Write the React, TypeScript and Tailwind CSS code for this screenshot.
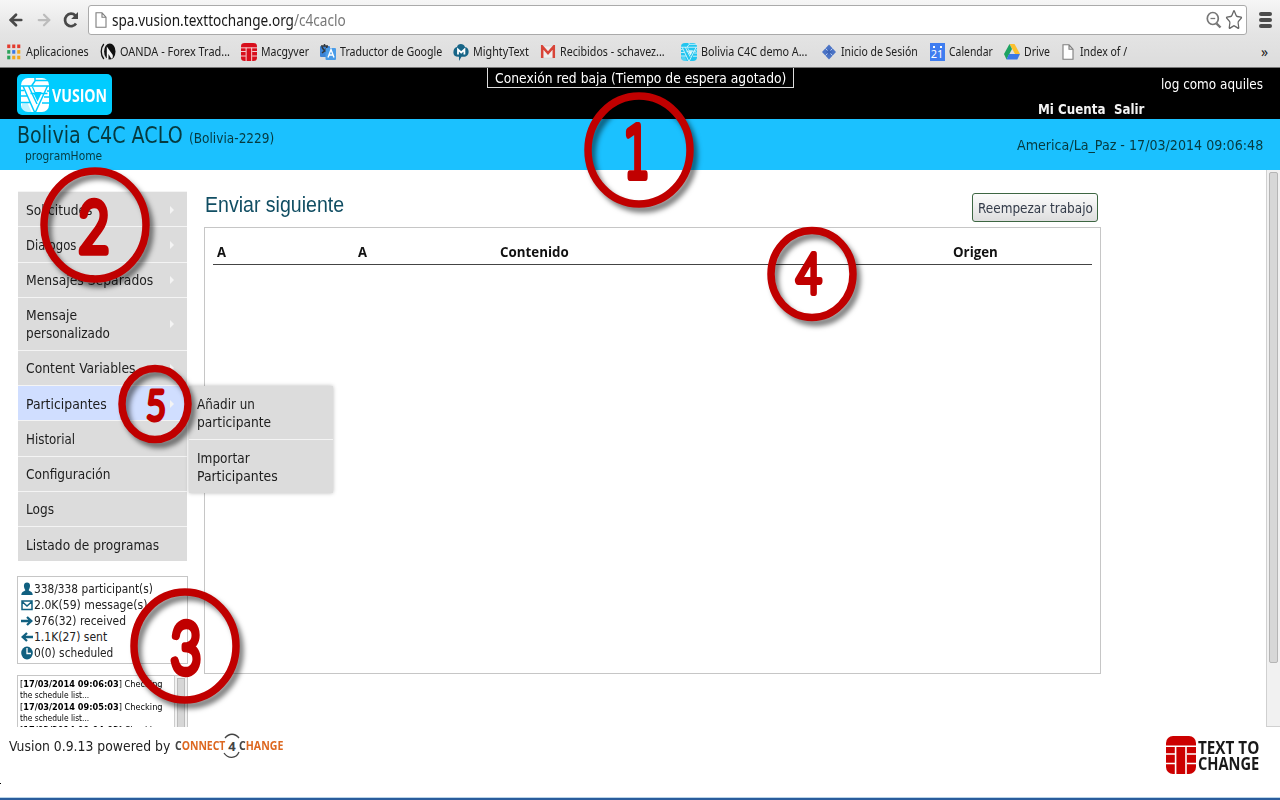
import { useLayoutEffect, useRef, useState, type ReactNode } from "react";
import { ArrowLeft, ArrowRight, Star } from "lucide-react";

// Single line of text, condensed or widened to occupy exactly `w` pixels.
function Fit({ w, className = "", children }: { w: number; className?: string; children: ReactNode }) {
  const ref = useRef<HTMLSpanElement>(null);
  const [scale, setScale] = useState(1);
  useLayoutEffect(() => {
    const el = ref.current;
    if (el && el.offsetWidth) setScale(w / el.offsetWidth);
  }, [w]);
  return (
    <span className={`block shrink-0 whitespace-nowrap ${className}`} style={{ width: w }}>
      <span ref={ref} className="inline-block origin-left" style={{ transform: `scaleX(${scale})` }}>
        {children}
      </span>
    </span>
  );
}

const PageIcon = ({ className = "" }: { className?: string }) => (
  <svg viewBox="0 0 12 16" className={className} fill="#fff" stroke="#7d7d7d" strokeWidth="1.1">
    <path d="M1 .8h6l4 4.4v10H1zM7 .8v4.4h4" />
  </svg>
);

const AppsIcon = () => (
  <svg viewBox="0 0 16 16" className="size-4">
    {["#e33b2e", "#e33b2e", "#e33b2e", "#2ba35a", "#3a78e7", "#f4a81d", "#2ba35a", "#f4a81d", "#f4a81d"].map((c, i) => (
      <rect key={i} x={1.2 + (i % 3) * 5} y={0.5 + Math.floor(i / 3) * 5.6} width="3.1" height="3.6" fill={c} />
    ))}
  </svg>
);

const OandaIcon = () => (
  <svg viewBox="0 0 16 17" className="h-[17px] w-4">
    <path d="M3.8 1C.4 5 .4 12 3.800 16" fill="none" stroke="#111" strokeWidth="1.3" />
    <ellipse cx="9.800" cy="8.500" rx="5.700" ry="8" fill="#111" />
    <path d="M6.800 3.500l6 8.500v2.500l-1.500 1.200L8.500 11v5H6.800z" fill="#f4f4f4" />
  </svg>
);

const TtcIcon = ({ className = "size-4", color = "#d80e1c" }: { className?: string; color?: string }) => (
  <svg viewBox="0 0 30 38" preserveAspectRatio="none" className={className}>
    <rect width="30" height="38" rx="7" fill={color} />
    <path d="M0 10.2h30M9.6 10v28M20 10v28M0 18h9M0 27.5h9M21 18h9M21 27.5h9" stroke="#fff" strokeWidth="1.6" fill="none" />
  </svg>
);

const TranslateIcon = () => (
  <svg viewBox="0 0 16 17" className="h-[17px] w-4">
    <rect x="0" y="3" width="10" height="11" rx="1" fill="#3c83d4" />
    <path d="M1 3h7M4.5 1v2M2 10c3-2 5-4 5-7M2 4c1 3 3 4 5 5" stroke="#33383d" strokeWidth="1.5" fill="none" />
    <rect x="5.5" y="5" width="10.5" height="12" rx="1" fill="#4a9ce8" />
    <path d="M8 14.5l3-8 3 8M9 12h4" stroke="#fff" strokeWidth="1.4" fill="none" />
  </svg>
);

const MightyIcon = () => (
  <svg viewBox="0 0 16 18" className="h-[18px] w-4">
    <path d="M4 4C4.500 0 11 0 12 4c4 0 5 7 1.500 9-1.500 1-4 .8-5 .8L6 18v-4.200C2 14 .2 12 .4 9 .5 6 2 4.500 4 4z" fill="#176587" />
    <path d="M5 11.500v-5l3.200 3 3.200-3v5" stroke="#fff" strokeWidth="1.8" fill="none" />
  </svg>
);

const GmailIcon = () => (
  <svg viewBox="0 0 16 14" className="h-3.5 w-4">
    <path d="M2 1h12v12H2z" fill="#eee" stroke="#c9c9c9" strokeWidth=".5" />
    <path d="M2.200 13V1.500L8 8l5.800-6.500V13" stroke="#d84438" strokeWidth="2.500" fill="none" />
  </svg>
);

const VusionMark = ({ className, fg, bg }: { className: string; fg: string; bg: string }) => (
  <svg viewBox="0 0 28 34" preserveAspectRatio="none" className={className}>
    <rect width="28" height="34" rx="7" fill={fg} />
    <path d="M0 8h28M14 0v2.500h14M14 3L10.500 8M0 12.500h3M0 18h6M0 24.500h9M26 13h2M23 19h5M21 25h7M2 8l11.500 26M7.500 8l8.500 18M26.500 8L14.500 34M9.500 15.500h17" stroke={bg} strokeWidth="1.500" fill="none" />
    <path d="M1 25.500l5.500-.5 4 9H1zM12.500 15.500h8l-4 8z" fill={bg} fillOpacity=".25" />
    <path d="M11.500 9l2.500 5.500h6.500" stroke={bg} strokeWidth="1.200" fill="none" />
    <path d="M13 16h7l-3.500 7.500z" fill={bg} />
  </svg>
);

const DiamondIcon = () => (
  <svg viewBox="0 0 16 16" className="size-4">
    <path d="M8 .5L15 8l-7 7.500L1 8z" fill="#4b73c5" />
    <path d="M4.500 4.500l7 7M11.500 4.500l-7 7" stroke="#c4d5f4" strokeWidth=".9" />
    <path d="M8 5l3 3-3 3-3-3z" fill="#3c64b8" />
  </svg>
);

const CalendarIcon = () => (
  <span className="flex h-[18px] w-[15px] flex-col items-center justify-end bg-[#3f7df0] pb-px text-[11px] leading-[12px] text-white">
    <span className="flex gap-[5px]"><i className="size-[2px] bg-white" /><i className="size-[2px] bg-white" /></span>
    21
  </span>
);

const DriveIcon = () => (
  <svg viewBox="0 0 16 16" className="size-4">
    <path d="M5.500 0h5l5.500 10h-5z" fill="#fbc02d" />
    <path d="M5.500 0L0 10l2.500 5.500L8 5z" fill="#1da362" />
    <path d="M5 10h11l-2.700 5.500H2.500z" fill="#3b78e7" />
  </svg>
);

const bookmarks = [
  { gap: "ml-[6px]", icon: <AppsIcon />, label: "Aplicaciones", w: 63 },
  { gap: "ml-[11px]", icon: <OandaIcon />, label: "OANDA - Forex Trad...", w: 110 },
  { gap: "ml-[11px]", icon: <TtcIcon className="h-[18px] w-4" />, label: "Macgyver", w: 48 },
  { gap: "ml-[11px]", icon: <TranslateIcon />, label: "Traductor de Google", w: 102 },
  { gap: "ml-[11px]", icon: <MightyIcon />, label: "MightyText", w: 56 },
  { gap: "ml-[11px]", icon: <GmailIcon />, label: "Recibidos - schavez...", w: 105 },
  { gap: "ml-[16px]", icon: <VusionMark className="h-[18px] w-4" fg="#22c5ef" bg="#e4f8fc" />, label: "Bolivia C4C demo A...", w: 106 },
  { gap: "ml-[14px]", icon: <DiamondIcon />, label: "Inicio de Sesión", w: 77 },
  { gap: "ml-[11px]", icon: <CalendarIcon />, label: "Calendar", w: 44 },
  { gap: "ml-[11px]", icon: <DriveIcon />, label: "Drive", w: 26 },
  { gap: "ml-[10px]", icon: <PageIcon className="h-4 w-3" />, label: "Index of /", w: 47 },
];

const menu = [
  { lines: [["Solicitudes", 66]], arrow: true },
  { lines: [["Dialogos", 50]], arrow: true },
  { lines: [["Mensajes Separados", 127]], arrow: true },
  { lines: [["Mensaje", 51], ["personalizado", 84]], arrow: true },
  { lines: [["Content Variables", 110]], arrow: true },
  { lines: [["Participantes", 81]], arrow: true, active: true },
  { lines: [["Historial", 49]] },
  { lines: [["Configuración", 84]] },
  { lines: [["Logs", 28]] },
  { lines: [["Listado de programas", 133]] },
] as { lines: [string, number][]; arrow?: boolean; active?: boolean }[];

const Glyph = ({ children }: { children: ReactNode }) => (
  <svg viewBox="0 0 12 14" className="mr-px h-3.5 w-3 shrink-0" fill="#116080" stroke="none">{children}</svg>
);

const stats: { icon: ReactNode; label: string; w: number }[] = [
  { icon: <Glyph><path d="M6 .5c4 0 3.500 5 1.700 7.500 0 1.500 4 1 4 5H.3c0-4 4-3.500 4-5C2.500 5.500 2 .5 6 .5z" /></Glyph>, label: "338/338 participant(s)", w: 119 },
  { icon: <Glyph><path d="M1 3h10v8.500H1zM1 3.500L6 8l5-4.500" fill="none" stroke="#116080" strokeWidth="1.500" /></Glyph>, label: "2.0K(59) message(s)", w: 113 },
  { icon: <Glyph><path d="M0 7h10M6 3l4.300 4L6 11" fill="none" stroke="#116080" strokeWidth="2.300" /></Glyph>, label: "976(32) received", w: 91.5 },
  { icon: <Glyph><path d="M12 7H2M6 3L1.700 7 6 11" fill="none" stroke="#116080" strokeWidth="2.300" /></Glyph>, label: "1.1K(27) sent", w: 73 },
  { icon: <Glyph><ellipse cx="6" cy="7" rx="5.800" ry="6.500" /><path d="M6 2v5.500h4" stroke="#fff" strokeWidth="1.300" fill="none" /></Glyph>, label: "0(0) scheduled", w: 79.5 },
];

type BadgeProps = {
  className: string;
  digitClass: string;
  rx: number;
  ry: number;
  n: number;
  size: number;
  stroke: number;
  sx: number;
  dx?: number;
  dy: number;
};

function Badge({ className, digitClass, rx, ry, n, size, stroke, sx, dx = 0, dy }: BadgeProps) {
  return (
    <svg className={`absolute z-20 h-[140px] w-[140px] overflow-visible ${className}`} viewBox="-70 -70 140 140">
      <ellipse rx={rx} ry={ry} fill="none" stroke="#c00000" strokeWidth="7.500" className="[filter:drop-shadow(4px_5px_2.5px_rgba(0,0,0,0.5))]" />
      <text
        transform={`translate(${dx} ${dy}) scale(${sx} 1)`}
        textAnchor="middle"
        fontSize={size}
        fill="#c00000"
        stroke="#c00000"
        strokeWidth={stroke}
        strokeLinejoin="round"
        className={digitClass}
      >
        {n}
      </text>
    </svg>
  );
}

const slabDigit = "font-['DejaVu_Sans',sans-serif] font-extralight";
const roundDigit = "font-['Lato',sans-serif] font-light";

function LogEntry({ time }: { time: string }) {
  return (
    <div className="text-[8.5px] leading-[11.4px] text-black">
      <Fit w={143}><span>[<b>{time}</b>] Checking</span></Fit>
      <Fit w={69}>the schedule list...</Fit>
    </div>
  );
}

export default function App() {
  return (
    <div className="relative flex h-[800px] w-[1280px] flex-col overflow-hidden bg-white font-['DejaVu_Sans_Condensed','DejaVu_Sans',sans-serif] text-[#222]">
      <div className="flex h-[68px] shrink-0 flex-col border-b border-[#777] bg-linear-to-b from-[#f6f6f6] via-[#e4e4e4] to-[#dcdcdc] font-['Noto_Sans',sans-serif]">
        <div className="flex h-[36px] shrink-0 items-center pt-[4px]">
          <ArrowLeft className="ml-[7px] size-[18px] text-[#484848]" strokeWidth={3.6} />
          <ArrowRight className="ml-[10px] size-[18px] text-[#bcbcbc]" strokeWidth={3} />
          <svg viewBox="0 0 18 18" className="ml-[9px] size-[18px]" fill="none" stroke="#484848">
            <path d="M14 12.500A6 6.300 0 1 1 13.300 4.500" strokeWidth="2.700" />
            <path d="M16 1v7H9.200z" fill="#484848" stroke="none" />
          </svg>
          <div className="ml-[8px] flex h-[30px] w-[1159px] items-center rounded-[3px] border border-[#aaa] bg-white">
            <PageIcon className="ml-[6px] h-[18px] w-[12px]" />
            <Fit w={234} className="ml-[5px] text-[16.5px] leading-7 text-[#181818]">
              spa.vusion.texttochange.org<span className="text-[#777]">/c4caclo</span>
            </Fit>
            <svg viewBox="0 0 16 18" className="ml-auto h-[18px] w-4" fill="none" stroke="#777">
              <ellipse cx="6.800" cy="7.500" rx="5.500" ry="6" strokeWidth="1.700" />
              <path d="M4.500 7.500h4.700" strokeWidth="1.300" />
              <path d="M10.500 12.500l4 4" strokeWidth="2.400" />
            </svg>
            <Star className="ml-[3px] mr-[3px] h-[22px] w-[18px] text-[#666]" strokeWidth={1.6} preserveAspectRatio="none" />
          </div>
          <div className="ml-[12px] flex w-[13px] flex-col gap-[2px]">
            <div className="h-[4px] rounded-sm bg-[#4c4c4c]" />
            <div className="h-[4px] rounded-sm bg-[#4c4c4c]" />
            <div className="h-[4px] rounded-sm bg-[#4c4c4c]" />
          </div>
        </div>
        <div className="flex h-[31px] shrink-0 items-center text-[12.5px] text-[#202020]">
          {bookmarks.map((b) => (
            <div key={b.label} className={`flex shrink-0 items-center gap-1 ${b.gap}`}>
              <span className="flex w-4 shrink-0 justify-center">{b.icon}</span>
              <Fit w={b.w} className="leading-[18px]">{b.label}</Fit>
            </div>
          ))}
          <span className="ml-[134px] text-sm leading-4">»</span>
        </div>
      </div>

      <header className="flex h-[51px] shrink-0 bg-black text-white">
        <div className="ml-[17px] mt-[6px] flex h-[41px] w-[95px] items-center rounded-[5px] bg-[#00ccff]">
          <VusionMark className="ml-[4px] h-[34px] w-[28px]" fg="#fff" bg="#00ccff" />
          <Fit w={55} className="ml-[3px] font-['Open_Sans',sans-serif] text-[18px] font-bold leading-6">VUSION</Fit>
        </div>
        <div className="ml-[375px] flex h-[20px] w-[307px] justify-center border border-t-0 border-[#ddd] font-['DejaVu_Sans',sans-serif] text-[13.5px] leading-[20px]">
          <Fit w={291}>Conexión red baja (Tiempo de espera agotado)</Fit>
        </div>
        <div className="ml-auto mr-[17px] flex w-[225px] flex-col pt-[6px]">
          <Fit w={102} className="self-end text-[13.5px] leading-[20px]">log como aquiles</Fit>
          <div className="mt-[5px] flex gap-[9px] text-[14px] font-bold leading-[20px] text-[#f2f2f2]">
            <Fit w={67}>Mi Cuenta</Fit>
            <Fit w={30}>Salir</Fit>
          </div>
        </div>
      </header>

      <div className="flex h-[51px] shrink-0 justify-between bg-[#1bc1ff] text-[#063a3f]">
        <div className="pl-[17px]">
          <div className="flex h-[28px] items-baseline gap-[6px] pt-[2px] font-['DejaVu_Sans',sans-serif]">
            <Fit w={166} className="text-[23px] leading-[29px]">Bolivia C4C ACLO</Fit>
            <Fit w={85} className="text-[14px]">(Bolivia-2229)</Fit>
          </div>
          <Fit w={77} className="ml-[8px] text-[12.5px] leading-[17px]">programHome</Fit>
        </div>
        <Fit w={246} className="mr-[17px] mt-[15px] text-[14px] leading-[22px]">America/La_Paz - 17/03/2014 09:06:48</Fit>
      </div>

      <main className="flex h-[557px] shrink-0 overflow-hidden">
        <aside className="ml-[17px] w-[171px] shrink-0 pt-[21px]">
          <nav className="ml-px w-[169px] text-[14px] leading-[18px] text-[#1d1d1d]">
            {menu.map((m) => (
              <div
                key={m.lines[0][0]}
                className={`flex items-center justify-between border-t border-[#f4f4f4] pl-[8px] pr-[13px] pt-px ${m.lines.length > 1 ? "h-[53px]" : "h-[35.25px]"} ${m.active ? "bg-[#d0deff]" : "bg-[#dcdcdc]"}`}
              >
                <div>{m.lines.map(([t, w]) => <Fit key={t} w={w}>{t}</Fit>)}</div>
                {m.arrow && <svg viewBox="0 0 4 8" className="h-2 w-1 shrink-0"><path d="M0 0l4 4-4 4z" fill="#f4f4f4" /></svg>}
              </div>
            ))}
          </nav>
          <div className="mt-[14.750px] h-[88px] border border-[#c6c6c6] pl-[3px] pt-[4px] text-[12px] leading-4">
            {stats.map((s) => (
              <div key={s.label} className="flex items-center">{s.icon}<Fit w={s.w}>{s.label}</Fit></div>
            ))}
          </div>
          <div className="mt-[11px] flex h-[60px] justify-between border border-[#c6c6c6]">
            <div className="ml-[2px] mt-[3px]">
              <LogEntry time="17/03/2014 09:06:03" />
              <LogEntry time="17/03/2014 09:05:03" />
              <LogEntry time="17/03/2014 09:04:03" />
            </div>
            <div className="w-[13px] border-l border-[#ccc] bg-[#f1f1f1] px-[2px] pt-[2px]">
              <div className="h-[60px] border border-[#bbb] bg-[#d6d6d6]" />
            </div>
          </div>
        </aside>

        <section className="ml-[16px] w-[897px] shrink-0">
          <div className="flex h-[57px] justify-between">
            <Fit w={139} className="ml-[1px] mt-[21px] font-['Liberation_Sans',sans-serif] text-[22.5px] leading-[28px] text-[#114e63]">Enviar siguiente</Fit>
            <button className="mr-[3px] mt-[23px] flex h-[29px] w-[126px] items-center justify-center rounded-[3px] border border-[#3d6642] bg-linear-to-b from-[#fcfcfc] to-[#dedede] pt-px text-[14px] text-[#333b49]">
              <Fit w={115}>Reempezar trabajo</Fit>
            </button>
          </div>
          <div className="h-[447px] border border-[#c6c6c6] px-[8px] pt-[11px]">
            <div className="flex h-[26px] border-b-[1.500px] border-[#444] pl-[4px] font-['Open_Sans',sans-serif] text-[14.5px] font-bold leading-[26px] text-[#111]">
              <div className="w-[141px]"><Fit w={9}>A</Fit></div>
              <div className="w-[142px]"><Fit w={9}>A</Fit></div>
              <div className="w-[453px]"><Fit w={69}>Contenido</Fit></div>
              <Fit w={45}>Origen</Fit>
            </div>
          </div>
        </section>

        <div className="ml-auto w-[14px] border-b border-l border-[#d0d0d0] bg-[#f1f1f1] px-[2px] pt-[2px]">
          <div className="h-[491px] w-[9px] rounded-[2px] border border-[#b5b5b5] bg-[#d7d7d7]" />
        </div>
      </main>

      <footer className="flex flex-1 items-start pl-[9px]">
        <Fit w={161} className="mt-[8px] text-[14px] leading-[22px]">Vusion 0.9.13 powered by</Fit>
        <div className="ml-[5px] mt-[7px] flex h-6 items-center font-['Open_Sans',sans-serif] text-[12.5px] font-bold leading-[24px] text-[#dd6820]">
          <Fit w={50}><span className="text-[#444]">C</span>ONNECT</Fit>
          <div className="grid h-6 w-[14px] grid-cols-[18px] grid-rows-[24px] place-items-center justify-center text-[#444]">
            <svg viewBox="0 0 18 26" className="col-start-1 row-start-1 h-[26px] w-[18px]" fill="none" stroke="#444" strokeWidth="1.300"><path d="M2 5C6 0 12 0 16 5M1 20c4 6 12 6 15-1" /></svg>
            <span className="col-start-1 row-start-1 text-[13px]">4</span>
          </div>
          <Fit w={44}><span className="text-[#444]">C</span>HANGE</Fit>
        </div>
        <div className="ml-auto mr-[21px] mt-[9px] flex items-center gap-[2px]">
          <TtcIcon className="h-[38px] w-[30px]" color="#cc0000" />
          <div className="font-['Open_Sans',sans-serif] text-[17.5px] font-bold leading-[16px] text-[#191919]">
            <Fit w={61}>TEXT TO</Fit>
            <Fit w={61}>CHANGE</Fit>
          </div>
        </div>
      </footer>
      <div className="h-[3px] shrink-0 border-t border-[#b9d4e8] bg-[#2a5d9c]" />
      <span className="absolute left-0 top-[783px] h-px w-px bg-black" />

      <div className="absolute left-[189px] top-[386px] z-10 w-[144px] bg-[#dcdcdc] text-[14px] leading-[18px] text-[#1d1d1d] shadow-[0_0_4px_rgba(0,0,0,0.28)]">
        <div className="h-[53px] pl-[8px] pt-[9px]"><Fit w={58}>Añadir un</Fit><Fit w={74}>participante</Fit></div>
        <div className="h-[54px] border-t border-[#f4f4f4] pl-[8px] pt-[9px]"><Fit w={53}>Importar</Fit><Fit w={81}>Participantes</Fit></div>
      </div>

      <Badge className="left-[569px] top-[80px]" digitClass={slabDigit} rx={51} ry={54} n={1} size={69} stroke={8} sx={0.6} dx={-2} dy={27} />
      <Badge className="left-[25px] top-[155px]" digitClass={roundDigit} rx={51} ry={54} n={2} size={70} stroke={7.5} sx={0.76} dx={-1} dy={27} />
      <Badge className="left-[115px] top-[576px]" digitClass={roundDigit} rx={51} ry={54} n={3} size={70} stroke={7.5} sx={0.76} dx={1} dy={27} />
      <Badge className="left-[742px] top-[204px]" digitClass={roundDigit} rx={41} ry={43.5} n={4} size={56} stroke={6} sx={0.78} dx={-3} dy={19} />
      <Badge className="left-[85px] top-[334px]" digitClass={roundDigit} rx={33} ry={35.5} n={5} size={42} stroke={5} sx={0.8} dx={1} dy={16} />
    </div>
  );
}
